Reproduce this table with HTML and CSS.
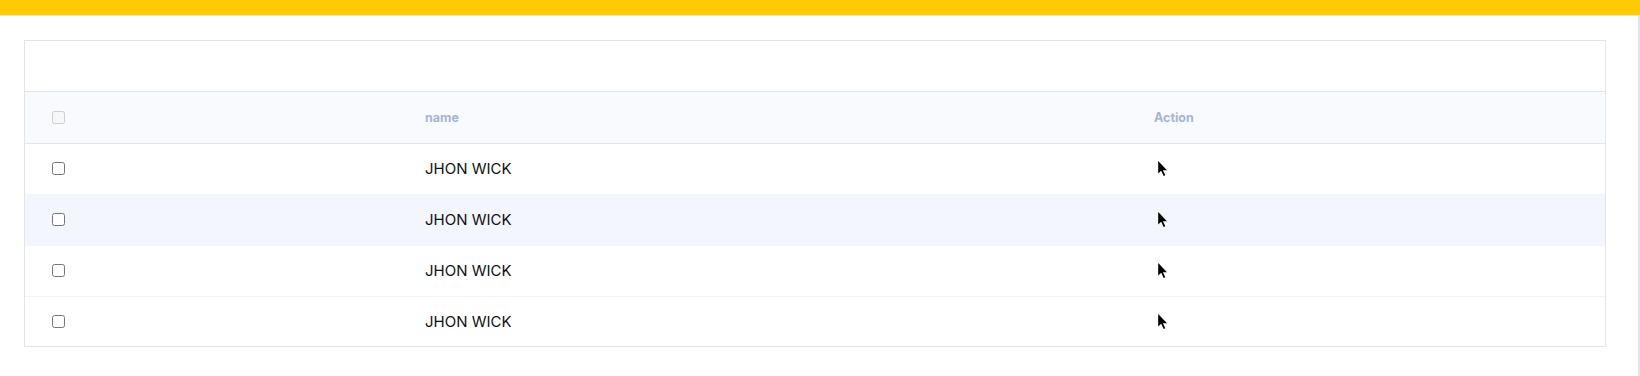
FILE: index.html
```html
<!DOCTYPE html>
<html>
<head>
<meta charset="utf-8">
<link rel="stylesheet" href="styles.css">
</head>
<body>
<div class="topbar"></div>
<main class="content">
  <section class="card">
    <div class="toolbar"></div>
    <table class="grid">
      <colgroup>
        <col class="c-check">
        <col class="c-name">
        <col class="c-action">
      </colgroup>
      <thead>
        <tr>
          <th class="cell-check"><input type="checkbox" disabled></th>
          <th>name</th>
          <th>Action</th>
        </tr>
      </thead>
      <tbody>
        <tr>
          <td class="cell-check"><input type="checkbox"></td>
          <td>JHON WICK</td>
          <td><svg class="pointer" width="12" height="17" viewBox="0 0 12 17"><path d="M1.2 1 L1.2 13.6 L4.2 10.8 L6.7 16 L8.3 15.3 L5.9 10.2 L10 10.2 Z" fill="#000"/></svg></td>
        </tr>
        <tr>
          <td class="cell-check"><input type="checkbox"></td>
          <td>JHON WICK</td>
          <td><svg class="pointer" width="12" height="17" viewBox="0 0 12 17"><path d="M1.2 1 L1.2 13.6 L4.2 10.8 L6.7 16 L8.3 15.3 L5.9 10.2 L10 10.2 Z" fill="#000"/></svg></td>
        </tr>
        <tr>
          <td class="cell-check"><input type="checkbox"></td>
          <td>JHON WICK</td>
          <td><svg class="pointer" width="12" height="17" viewBox="0 0 12 17"><path d="M1.2 1 L1.2 13.6 L4.2 10.8 L6.7 16 L8.3 15.3 L5.9 10.2 L10 10.2 Z" fill="#000"/></svg></td>
        </tr>
        <tr>
          <td class="cell-check"><input type="checkbox"></td>
          <td>JHON WICK</td>
          <td><svg class="pointer" width="12" height="17" viewBox="0 0 12 17"><path d="M1.2 1 L1.2 13.6 L4.2 10.8 L6.7 16 L8.3 15.3 L5.9 10.2 L10 10.2 Z" fill="#000"/></svg></td>
        </tr>
      </tbody>
    </table>
  </section>
</main>
</body>
</html>
```

FILE: styles.css
```css
* { box-sizing: border-box; }
html, body { margin: 0; padding: 0; background: #fff; }
body {
  font-family: Inter, "Noto Sans", sans-serif;
  height: 376px;
  overflow: hidden;
}
.topbar {
  height: 16px;
  background: #ffcb05;
  border-bottom: 1px solid #f3e7b8;
}
.content {
  padding: 24px 32px 0 24px;
  border-right: 2px solid #dde5f1;
  height: 360px;
}
.card {
  border: 1px solid #dfe6f2;
  background: #fff;
}
.toolbar {
  height: 51px;
  border-bottom: 1px solid #dfe6f2;
}
.grid {
  width: 100%;
  border-collapse: collapse;
  table-layout: fixed;
}
.c-check { width: 376px; }
.c-name { width: 729px; }
.grid th, .grid td {
  height: 51px;
  padding: 0 0 0 24px;
  text-align: left;
  vertical-align: middle;
}
.grid thead th {
  background: #f8fafe;
  border-bottom: 1px solid #dfe6f2;
  color: #a7b4d3;
  font-size: 12.5px;
  font-weight: 700;
}
.grid tbody td {
  border-bottom: 1px solid #f1f4fa;
  color: #111;
  font-size: 15px;
}
.grid tbody tr:last-child td { border-bottom: none; height: 50px; }
.grid tbody tr:nth-child(2) td { background: #f3f6fd; }
.grid .cell-check { padding-left: 27px; }
.grid input[type="checkbox"] {
  margin: 0;
  width: 13px;
  height: 13px;
  display: block;
}
.pointer {
  display: block;
  margin-left: 3px;
}
```
